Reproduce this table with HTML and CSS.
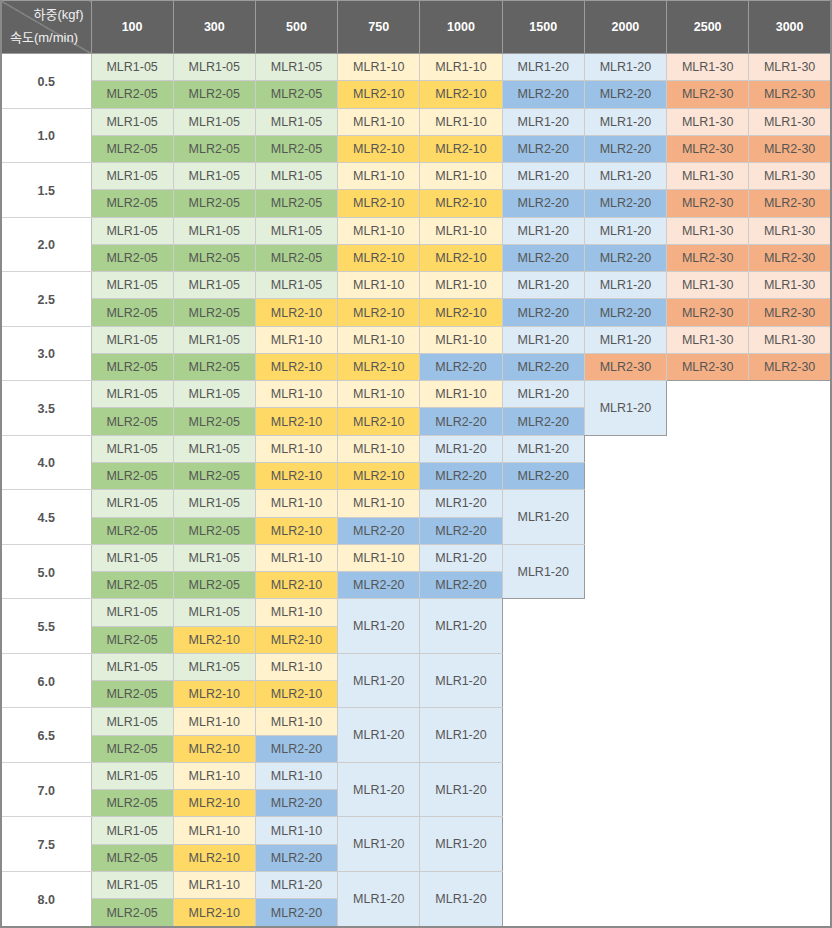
FILE: index.html
```html
<!DOCTYPE html>
<html lang="ko">
<head>
<meta charset="utf-8">
<title>MLR 선정표</title>
<link rel="stylesheet" href="styles.css">
</head>
<body>
<table class="chart">
<colgroup><col class="c0"><col><col><col><col><col><col><col><col><col></colgroup>
<thead>
<tr class="head">
<th class="corner"><span class="load">하중(kgf)</span><span class="speed">속도(m/min)</span></th>
<th>100</th><th>300</th><th>500</th><th>750</th><th>1000</th><th>1500</th><th>2000</th><th>2500</th><th>3000</th>
</tr>
</thead>
<tbody>
<tr><th class="sp" rowspan="2">0.5</th><td class="g1">MLR1-05</td><td class="g1">MLR1-05</td><td class="g1">MLR1-05</td><td class="y1">MLR1-10</td><td class="y1">MLR1-10</td><td class="b1">MLR1-20</td><td class="b1">MLR1-20</td><td class="o1">MLR1-30</td><td class="o1">MLR1-30</td></tr>
<tr><td class="g2">MLR2-05</td><td class="g2">MLR2-05</td><td class="g2">MLR2-05</td><td class="y2">MLR2-10</td><td class="y2">MLR2-10</td><td class="b2">MLR2-20</td><td class="b2">MLR2-20</td><td class="o2">MLR2-30</td><td class="o2">MLR2-30</td></tr>

<tr><th class="sp" rowspan="2">1.0</th><td class="g1">MLR1-05</td><td class="g1">MLR1-05</td><td class="g1">MLR1-05</td><td class="y1">MLR1-10</td><td class="y1">MLR1-10</td><td class="b1">MLR1-20</td><td class="b1">MLR1-20</td><td class="o1">MLR1-30</td><td class="o1">MLR1-30</td></tr>
<tr><td class="g2">MLR2-05</td><td class="g2">MLR2-05</td><td class="g2">MLR2-05</td><td class="y2">MLR2-10</td><td class="y2">MLR2-10</td><td class="b2">MLR2-20</td><td class="b2">MLR2-20</td><td class="o2">MLR2-30</td><td class="o2">MLR2-30</td></tr>

<tr><th class="sp" rowspan="2">1.5</th><td class="g1">MLR1-05</td><td class="g1">MLR1-05</td><td class="g1">MLR1-05</td><td class="y1">MLR1-10</td><td class="y1">MLR1-10</td><td class="b1">MLR1-20</td><td class="b1">MLR1-20</td><td class="o1">MLR1-30</td><td class="o1">MLR1-30</td></tr>
<tr><td class="g2">MLR2-05</td><td class="g2">MLR2-05</td><td class="g2">MLR2-05</td><td class="y2">MLR2-10</td><td class="y2">MLR2-10</td><td class="b2">MLR2-20</td><td class="b2">MLR2-20</td><td class="o2">MLR2-30</td><td class="o2">MLR2-30</td></tr>

<tr><th class="sp" rowspan="2">2.0</th><td class="g1">MLR1-05</td><td class="g1">MLR1-05</td><td class="g1">MLR1-05</td><td class="y1">MLR1-10</td><td class="y1">MLR1-10</td><td class="b1">MLR1-20</td><td class="b1">MLR1-20</td><td class="o1">MLR1-30</td><td class="o1">MLR1-30</td></tr>
<tr><td class="g2">MLR2-05</td><td class="g2">MLR2-05</td><td class="g2">MLR2-05</td><td class="y2">MLR2-10</td><td class="y2">MLR2-10</td><td class="b2">MLR2-20</td><td class="b2">MLR2-20</td><td class="o2">MLR2-30</td><td class="o2">MLR2-30</td></tr>

<tr><th class="sp" rowspan="2">2.5</th><td class="g1">MLR1-05</td><td class="g1">MLR1-05</td><td class="g1">MLR1-05</td><td class="y1">MLR1-10</td><td class="y1">MLR1-10</td><td class="b1">MLR1-20</td><td class="b1">MLR1-20</td><td class="o1">MLR1-30</td><td class="o1">MLR1-30</td></tr>
<tr><td class="g2">MLR2-05</td><td class="g2">MLR2-05</td><td class="y2">MLR2-10</td><td class="y2">MLR2-10</td><td class="y2">MLR2-10</td><td class="b2">MLR2-20</td><td class="b2">MLR2-20</td><td class="o2">MLR2-30</td><td class="o2">MLR2-30</td></tr>

<tr><th class="sp" rowspan="2">3.0</th><td class="g1">MLR1-05</td><td class="g1">MLR1-05</td><td class="y1">MLR1-10</td><td class="y1">MLR1-10</td><td class="y1">MLR1-10</td><td class="b1">MLR1-20</td><td class="b1">MLR1-20</td><td class="o1">MLR1-30</td><td class="o1">MLR1-30</td></tr>
<tr><td class="g2">MLR2-05</td><td class="g2">MLR2-05</td><td class="y2">MLR2-10</td><td class="y2">MLR2-10</td><td class="b2">MLR2-20</td><td class="b2">MLR2-20</td><td class="o2">MLR2-30</td><td class="o2 eb">MLR2-30</td><td class="o2 eb">MLR2-30</td></tr>

<tr><th class="sp" rowspan="2">3.5</th><td class="g1">MLR1-05</td><td class="g1">MLR1-05</td><td class="y1">MLR1-10</td><td class="y1">MLR1-10</td><td class="y1">MLR1-10</td><td class="b1">MLR1-20</td><td class="b1 er eb" rowspan="2">MLR1-20</td><td class="e" colspan="2" rowspan="2"></td></tr>
<tr><td class="g2">MLR2-05</td><td class="g2">MLR2-05</td><td class="y2">MLR2-10</td><td class="y2">MLR2-10</td><td class="b2">MLR2-20</td><td class="b2">MLR2-20</td></tr>

<tr><th class="sp" rowspan="2">4.0</th><td class="g1">MLR1-05</td><td class="g1">MLR1-05</td><td class="y1">MLR1-10</td><td class="y1">MLR1-10</td><td class="b1">MLR1-20</td><td class="b1 er">MLR1-20</td><td class="e" colspan="3" rowspan="2"></td></tr>
<tr><td class="g2">MLR2-05</td><td class="g2">MLR2-05</td><td class="y2">MLR2-10</td><td class="y2">MLR2-10</td><td class="b2">MLR2-20</td><td class="b2 er">MLR2-20</td></tr>

<tr><th class="sp" rowspan="2">4.5</th><td class="g1">MLR1-05</td><td class="g1">MLR1-05</td><td class="y1">MLR1-10</td><td class="y1">MLR1-10</td><td class="b1">MLR1-20</td><td class="b1 er" rowspan="2">MLR1-20</td><td class="e" colspan="3" rowspan="2"></td></tr>
<tr><td class="g2">MLR2-05</td><td class="g2">MLR2-05</td><td class="y2">MLR2-10</td><td class="b2">MLR2-20</td><td class="b2">MLR2-20</td></tr>

<tr><th class="sp" rowspan="2">5.0</th><td class="g1">MLR1-05</td><td class="g1">MLR1-05</td><td class="y1">MLR1-10</td><td class="y1">MLR1-10</td><td class="b1">MLR1-20</td><td class="b1 er eb" rowspan="2">MLR1-20</td><td class="e" colspan="3" rowspan="2"></td></tr>
<tr><td class="g2">MLR2-05</td><td class="g2">MLR2-05</td><td class="y2">MLR2-10</td><td class="b2">MLR2-20</td><td class="b2">MLR2-20</td></tr>

<tr><th class="sp" rowspan="2">5.5</th><td class="g1">MLR1-05</td><td class="g1">MLR1-05</td><td class="y1">MLR1-10</td><td class="b1" rowspan="2">MLR1-20</td><td class="b1 er" rowspan="2">MLR1-20</td><td class="e" colspan="4" rowspan="2"></td></tr>
<tr><td class="g2">MLR2-05</td><td class="y2">MLR2-10</td><td class="y2">MLR2-10</td></tr>

<tr><th class="sp" rowspan="2">6.0</th><td class="g1">MLR1-05</td><td class="g1">MLR1-05</td><td class="y1">MLR1-10</td><td class="b1" rowspan="2">MLR1-20</td><td class="b1 er" rowspan="2">MLR1-20</td><td class="e" colspan="4" rowspan="2"></td></tr>
<tr><td class="g2">MLR2-05</td><td class="y2">MLR2-10</td><td class="y2">MLR2-10</td></tr>

<tr><th class="sp" rowspan="2">6.5</th><td class="g1">MLR1-05</td><td class="y1">MLR1-10</td><td class="y1">MLR1-10</td><td class="b1" rowspan="2">MLR1-20</td><td class="b1 er" rowspan="2">MLR1-20</td><td class="e" colspan="4" rowspan="2"></td></tr>
<tr><td class="g2">MLR2-05</td><td class="y2">MLR2-10</td><td class="b2">MLR2-20</td></tr>

<tr><th class="sp" rowspan="2">7.0</th><td class="g1">MLR1-05</td><td class="y1">MLR1-10</td><td class="b1">MLR1-10</td><td class="b1" rowspan="2">MLR1-20</td><td class="b1 er" rowspan="2">MLR1-20</td><td class="e" colspan="4" rowspan="2"></td></tr>
<tr><td class="g2">MLR2-05</td><td class="y2">MLR2-10</td><td class="b2">MLR2-20</td></tr>

<tr><th class="sp" rowspan="2">7.5</th><td class="g1">MLR1-05</td><td class="y1">MLR1-10</td><td class="b1">MLR1-10</td><td class="b1" rowspan="2">MLR1-20</td><td class="b1 er" rowspan="2">MLR1-20</td><td class="e" colspan="4" rowspan="2"></td></tr>
<tr><td class="g2">MLR2-05</td><td class="y2">MLR2-10</td><td class="b2">MLR2-20</td></tr>

<tr><th class="sp" rowspan="2">8.0</th><td class="g1">MLR1-05</td><td class="y1">MLR1-10</td><td class="b1">MLR1-20</td><td class="b1" rowspan="2">MLR1-20</td><td class="b1 er" rowspan="2">MLR1-20</td><td class="e" colspan="4" rowspan="2"></td></tr>
<tr><td class="g2">MLR2-05</td><td class="y2">MLR2-10</td><td class="b2">MLR2-20</td></tr>
</tbody>
</table>
</body>
</html>
```

FILE: styles.css
```css
html, body {
  margin: 0;
  padding: 0;
  background: #ffffff;
}

.chart {
  border-collapse: collapse;
  table-layout: fixed;
  width: 832px;
  height: 928px;
  font-family: "Liberation Sans", Arial, "Noto Sans CJK KR", sans-serif;
  border: 2px solid #8a8a8a;
  border-top: 0;
}

.c0 {
  width: 90px;
}

.head {
  height: 53px;
}

.head th {
  background: #636363;
  color: #ffffff;
  font-weight: bold;
  font-size: 12.5px;
  border: 1px solid #9c9c9c;
  padding: 0;
  text-align: center;
}

.head th.corner {
  background: linear-gradient(to top right, #636363 calc(50% - 0.7px), #a8a8a8 50%, #636363 calc(50% + 0.7px));
  font-family: "Liberation Sans", "Noto Sans CJK KR", sans-serif;
  font-weight: normal;
  font-size: 13px;
  color: #f0f0f0;
  vertical-align: top;
}

.corner .load {
  display: block;
  text-align: right;
  padding: 4px 7px 0 0;
  line-height: 20px;
}

.corner .speed {
  display: block;
  text-align: left;
  padding: 3px 0 0 8px;
  line-height: 20px;
  white-space: nowrap;
}

.sp {
  background: #ffffff;
  color: #555555;
  font-weight: bold;
  font-size: 12.5px;
  border: 1px solid #d4d4d4;
  border-right-color: #bdbdbd;
  padding: 2px 0 0;
}

td {
  text-align: center;
  font-size: 12.5px;
  color: #555555;
  border: 1px solid #cccccc;
  padding: 0;
  height: 26px;
}

.g1 { background: #e2efda; }
.g2 { background: #a9d08e; }
.y1 { background: #fff2cc; }
.y2 { background: #ffd966; }
.b1 { background: #ddebf7; }
.b2 { background: #9bc2e6; }
.o1 { background: #fce4d6; }
.o2 { background: #f4b084; }

td.e {
  background: #ffffff;
  border: none;
}

td.er {
  border-right-color: #9a9a9a;
}

td.eb {
  border-bottom-color: #9a9a9a;
}
```
